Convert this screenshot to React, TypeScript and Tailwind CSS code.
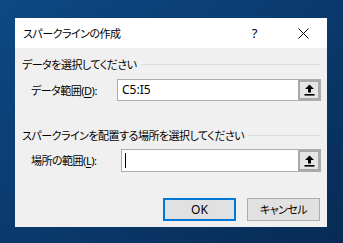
import React from 'react';

const JP_FONT = "font-['Noto_Sans','Noto_Sans_CJK_JP',sans-serif] [font-feature-settings:'palt']";

function PickerButton() {
  return (
    <div className="flex w-[22px] shrink-0 items-center justify-center self-stretch border-2 border-[#a9a9a9] bg-[#e6e6e6]">
      <svg width="11" height="12" viewBox="0 0 11 12" fill="#000">
        <path d="M5.5 0.5 L10 5 H7 V8.5 H4 V5 H1 Z" />
        <rect x="0.5" y="10" width="10" height="1.6" />
      </svg>
    </div>
  );
}

function SectionLabel({ text }: { text: string }) {
  return (
    <div className="flex h-[14px] items-center pr-[6px]">
      <span className="whitespace-nowrap leading-none">{text}</span>
      <span className="ml-[4px] h-px flex-1 bg-[#dcdcdc]" />
    </div>
  );
}

export default function App() {
  return (
    <div className="h-[243px] w-[343px] overflow-hidden bg-gradient-to-br from-[#0e4884] via-[#0a3a6d] to-[#072b55] pl-[15px] pt-[18px]">
      <div className={`flex h-[209px] w-[312px] flex-col bg-[#f0f0f0] text-[11px] tracking-[-0.5px] text-black ${JP_FONT}`}>
        <div className="flex h-[30px] shrink-0 items-center bg-white pl-[8px]">
          <span className="text-[11px] leading-none">スパークラインの作成</span>
          <span className="ml-auto mr-[41px] text-[13px] leading-none">?</span>
          <svg width="11" height="11" viewBox="0 0 11 11" className="mr-[18px]" stroke="#000" strokeWidth="1">
            <path d="M0.5 0.5 L10.5 10.5 M10.5 0.5 L0.5 10.5" />
          </svg>
        </div>

        <div className="flex flex-1 flex-col pl-[7px]">
          <div className="mt-[9px]">
            <SectionLabel text="データを選択してください" />
          </div>

          <div className="mt-[8px] flex h-[22px] items-center pl-[9px] pr-[6px]">
            <span className="w-[86px] shrink-0 leading-none">
              データ範囲(<span className="underline underline-offset-2">D</span>):
            </span>
            <div className="flex h-full flex-1 items-stretch border border-[#adadad] bg-white">
              <span className="flex flex-1 items-center pl-[4px] text-[12px] leading-none tracking-normal">C5:I5</span>
              <PickerButton />
            </div>
          </div>

          <div className="mt-[27px]">
            <SectionLabel text="スパークラインを配置する場所を選択してください" />
          </div>

          <div className="mt-[7px] flex h-[23px] items-center pl-[9px] pr-[6px]">
            <span className="w-[90px] shrink-0 leading-none">
              場所の範囲(<span className="underline underline-offset-2">L</span>):
            </span>
            <div className="flex h-full flex-1 items-stretch border border-[#adadad] bg-white">
              <span className="flex flex-1 items-center pl-[3px]">
                <span className="h-[15px] w-px bg-black" />
              </span>
              <PickerButton />
            </div>
          </div>

          <div className="mt-[26px] flex justify-end gap-[11px] pr-[7px]">
            <button className="flex h-[23px] w-[73px] items-center justify-center border-2 border-[#0078d7] bg-[#e1e1e1] text-[12px] leading-none tracking-normal">
              OK
            </button>
            <button className="flex h-[23px] w-[73px] items-center justify-center border border-[#adadad] bg-[#e1e1e1] leading-none">
              キャンセル
            </button>
          </div>
        </div>
      </div>
    </div>
  );
}
